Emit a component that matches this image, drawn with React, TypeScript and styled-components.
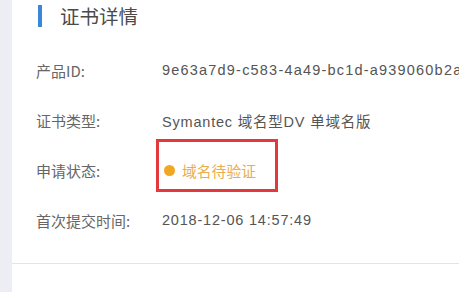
import React from "react";
import styled, { createGlobalStyle } from "styled-components";

const Global = createGlobalStyle`
  html, body { margin: 0; padding: 0; background: #ffffff; }
  body { font-family: "Liberation Sans", "Noto Sans CJK SC", sans-serif; overflow: hidden; }
`;

const Page = styled.div`
  display: flex;
  width: 459px;
  height: 292px;
  overflow: hidden;
`;

const SideStrip = styled.div`
  flex: 0 0 12px;
  background: #eceef3;
`;

const Panel = styled.div`
  flex: 1;
  display: flex;
  flex-direction: column;
  background: #ffffff;
  min-width: 0;
`;

const Header = styled.div`
  display: flex;
  align-items: center;
  gap: 18px;
  padding: 5px 0 0 26px;
  height: 22px;
`;

const Bar = styled.div`
  width: 4px;
  height: 22px;
  background: #3a86d8;
`;

const Title = styled.h2`
  margin: 0;
  font-family: "Noto Sans CJK SC", sans-serif;
  font-weight: 400;
  font-size: 19.5px;
  color: #4a4a4a;
  line-height: 22px;
`;

const List = styled.div`
  display: flex;
  flex-direction: column;
  gap: 30px;
  padding: 33px 0 33px 24px;
  border-bottom: 1px solid #e3e4e8;
`;

const Row = styled.div`
  display: flex;
  align-items: center;
  height: 20px;
  white-space: nowrap;
`;

const Label = styled.div`
  flex: 0 0 126px;
  font-family: "Noto Sans CJK SC", sans-serif;
  font-size: 15px;
  color: #666;
`;

const Value = styled.div<{ $wide?: boolean }>`
  font-size: 14.5px;
  letter-spacing: ${(p) => (p.$wide ? "1.2px" : "0.8px")};
  color: #555;
`;

const Status = styled.div`
  position: relative;
  align-self: stretch;
  display: flex;
  align-items: center;
  gap: 7px;
  padding-left: 2px;
  font-family: "Noto Sans CJK SC", sans-serif;
  font-size: 14.8px;
  color: #e9ad4f;
  &::after {
    content: "";
    position: absolute;
    box-sizing: border-box;
    left: -6px;
    top: -21px;
    width: 122px;
    height: 53px;
    border: 3px solid #e2393d;
  }
`;

const Dot = styled.span`
  width: 11px;
  height: 11px;
  border-radius: 50%;
  background: #f0a824;
`;

const rows = [
  { label: "产品ID:", value: "9e63a7d9-c583-4a49-bc1d-a939060b2a71", wide: true },
  { label: "证书类型:", value: "Symantec 域名型DV 单域名版", wide: false },
];

export default function App() {
  return (
    <Page>
      <Global />
      <SideStrip />
      <Panel>
        <Header>
          <Bar />
          <Title>证书详情</Title>
        </Header>
        <List>
          {rows.map((r) => (
            <Row key={r.label}>
              <Label>{r.label}</Label>
              <Value $wide={r.wide}>{r.value}</Value>
            </Row>
          ))}
          <Row>
            <Label>申请状态:</Label>
            <Status>
              <Dot />
              域名待验证
            </Status>
          </Row>
          <Row>
            <Label>首次提交时间:</Label>
            <Value>2018-12-06 14:57:49</Value>
          </Row>
        </List>
      </Panel>
    </Page>
  );
}
